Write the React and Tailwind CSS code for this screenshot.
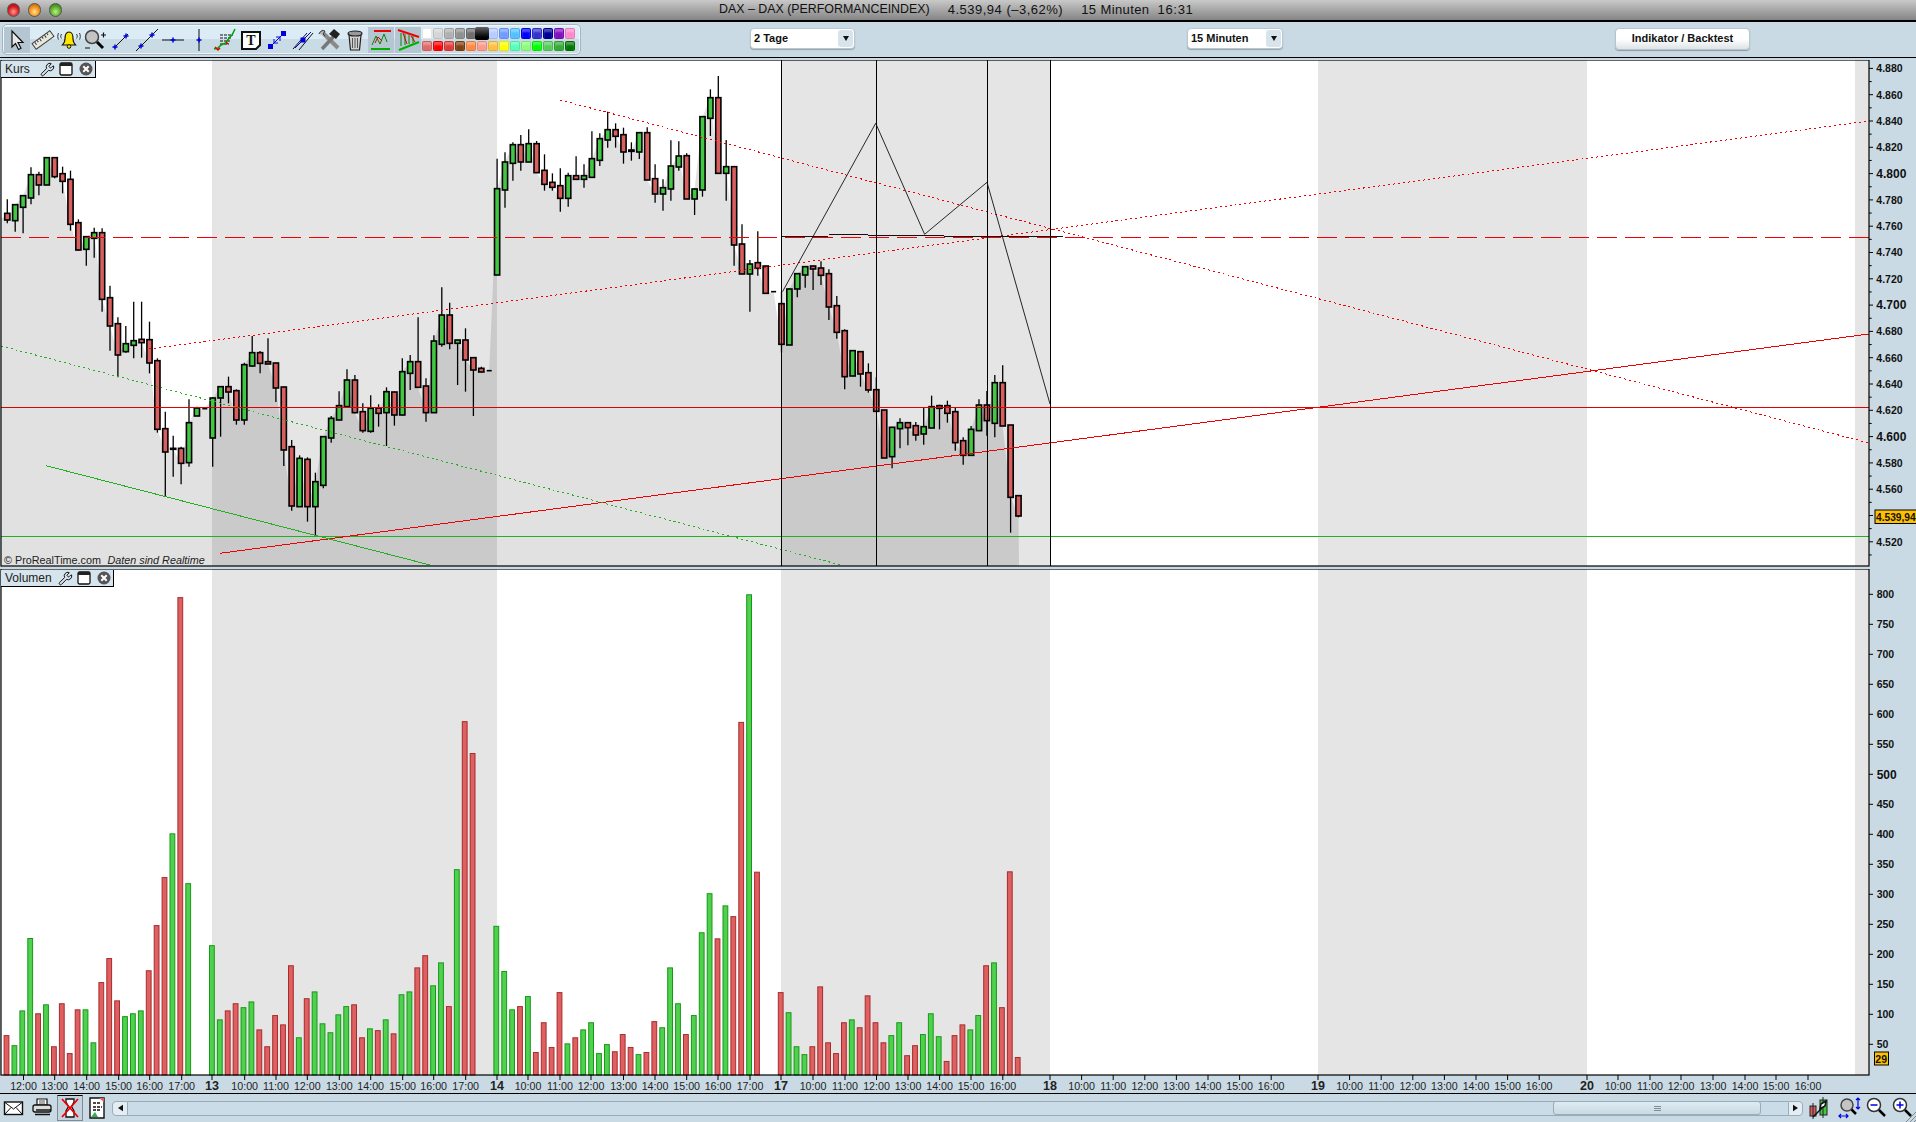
import React from 'react';
import { Wrench } from 'lucide-react';

// y values of candles are read off the chart at 3x, so screen y = 60 + v / 3
const CANDLES = [
  [418, 460, 480, 490, 'r'], [434, 434, 482, 515, 'g'], [407, 407, 442, 520, 'g'], [322, 344, 414, 433, 'g'],
  [335, 344, 375, 406, 'r'], [293, 293, 375, 375, 'g'], [293, 293, 350, 355, 'r'], [320, 341, 364, 400, 'r'],
  [332, 358, 493, 512, 'r'], [478, 488, 570, 572, 'r'], [530, 530, 568, 617, 'g'], [503, 518, 535, 593, 'g'],
  [505, 518, 718, 755, 'r'], [677, 713, 798, 872, 'r'], [772, 791, 885, 952, 'r'], [798, 851, 875, 878, 'g'],
  [725, 842, 856, 895, 'g'], [725, 838, 848, 893, 'r'], [785, 839, 909, 940, 'r'], [895, 902, 1108, 1118, 'r'],
  [1055, 1106, 1176, 1308, 'r'], [1127, 1165, 1168, 1250, 'k'], [1160, 1165, 1210, 1273, 'r'], [1018, 1088, 1208, 1220, 'g'],
  [1040, 1044, 1068, 1068, 'g'], [1046, 1046, 1046, 1046, 'k'], [1012, 1014, 1134, 1220, 'g'], [980, 980, 1014, 1130, 'g'],
  [950, 980, 996, 1030, 'r'], [988, 992, 1080, 1094, 'r'], [908, 914, 1080, 1094, 'g'], [828, 878, 918, 920, 'g'],
  [873, 878, 910, 940, 'r'], [835, 905, 912, 912, 'k'], [908, 909, 984, 1026, 'r'], [980, 981, 1170, 1218, 'r'],
  [1140, 1160, 1338, 1352, 'r'], [1186, 1195, 1340, 1340, 'g'], [1192, 1198, 1340, 1385, 'r'], [1238, 1265, 1340, 1425, 'g'],
  [1130, 1130, 1276, 1285, 'g'], [1068, 1075, 1134, 1148, 'g'], [994, 1037, 1080, 1080, 'g'], [928, 960, 1040, 1040, 'g'],
  [945, 960, 1058, 1060, 'r'], [1030, 1055, 1112, 1118, 'r'], [1006, 1045, 1114, 1118, 'g'], [1033, 1044, 1060, 1100, 'r'],
  [982, 995, 1058, 1158, 'g'], [995, 996, 1065, 1097, 'r'], [895, 935, 1065, 1066, 'g'], [885, 905, 940, 990, 'g'],
  [772, 905, 982, 982, 'r'], [955, 978, 1058, 1085, 'r'], [826, 843, 1058, 1058, 'g'], [682, 765, 853, 860, 'g'],
  [728, 765, 850, 868, 'r'], [840, 840, 850, 975, 'g'], [805, 840, 900, 995, 'r'], [893, 893, 930, 1068, 'r'],
  [920, 925, 936, 937, 'r'], [932, 932, 932, 932, 'k'], [296, 386, 645, 645, 'g'], [277, 306, 390, 443, 'g'],
  [247, 254, 310, 362, 'g'], [225, 254, 306, 332, 'r'], [208, 251, 306, 306, 'g'], [243, 251, 338, 338, 'r'],
  [283, 331, 373, 392, 'r'], [340, 367, 382, 392, 'r'], [325, 377, 415, 455, 'r'], [338, 347, 415, 440, 'g'],
  [289, 347, 358, 358, 'r'], [313, 347, 358, 383, 'g'], [214, 296, 352, 352, 'g'], [220, 236, 301, 318, 'g'],
  [155, 209, 240, 263, 'g'], [190, 209, 229, 263, 'r'], [203, 224, 276, 311, 'r'], [247, 270, 274, 302, 'k'],
  [218, 218, 276, 297, 'g'], [202, 218, 360, 360, 'r'], [313, 356, 402, 428, 'r'], [358, 383, 402, 452, 'g'],
  [241, 318, 387, 422, 'g'], [244, 288, 321, 332, 'g'], [280, 287, 417, 418, 'r'], [385, 387, 417, 465, 'g'],
  [170, 170, 390, 410, 'g'], [88, 113, 175, 228, 'g'], [48, 113, 340, 340, 'r'], [240, 320, 340, 422, 'g'],
  [320, 320, 555, 617, 'r'], [493, 552, 642, 642, 'r'], [600, 612, 642, 755, 'g'], [514, 608, 625, 647, 'r'],
  [617, 618, 700, 700, 'r'], [695, 695, 695, 695, 'k'], [695, 731, 853, 878, 'r'], [685, 687, 855, 855, 'g'],
  [640, 641, 687, 712, 'g'], [618, 620, 645, 683, 'g'], [617, 618, 627, 690, 'r'], [604, 624, 646, 675, 'r'],
  [628, 641, 741, 780, 'r'], [708, 737, 817, 836, 'r'], [808, 812, 950, 988, 'r'], [872, 872, 948, 948, 'g'],
  [875, 875, 942, 980, 'r'], [910, 938, 990, 998, 'r'], [952, 989, 1054, 1054, 'r'], [1050, 1050, 1194, 1194, 'r'],
  [1100, 1102, 1190, 1225, 'g'], [1075, 1088, 1106, 1165, 'g'], [1088, 1088, 1103, 1156, 'r'], [1086, 1097, 1125, 1142, 'r'],
  [1044, 1100, 1122, 1154, 'g'], [1007, 1040, 1104, 1105, 'g'], [1034, 1037, 1045, 1108, 'k'], [1022, 1037, 1060, 1088, 'r'],
  [1044, 1055, 1148, 1172, 'r'], [1132, 1142, 1186, 1214, 'r'], [1098, 1108, 1186, 1188, 'g'], [1018, 1035, 1112, 1112, 'g'],
  [993, 1035, 1082, 1127, 'r'], [945, 968, 1090, 1132, 'g'], [916, 968, 1098, 1098, 'r'], [1095, 1095, 1312, 1418, 'r'],
  [1307, 1307, 1368, 1372, 'r'],
];

// volume tops, screen y = 560 + v / 2.79; null = no bar for that candle
const VOLUMES = [
  [1327, 'r'], [1355, 'g'], [1258, 'g'], [1056, 'g'], [1266, 'r'], [1241, 'g'], [1358, 'r'], [1238, 'r'], [1377, 'r'], [1255, 'r'],
  [1255, 'g'], [1347, 'g'], [1179, 'r'], [1112, 'r'], [1230, 'r'], [1274, 'g'], [1266, 'g'], [1258, 'g'], [1146, 'r'], [1020, 'r'],
  [886, 'r'], [764, 'g'], [105, 'r'], [903, 'g'], null, null,
  [1076, 'g'], [1283, 'g'], [1258, 'r'], [1238, 'r'], [1249, 'g'], [1233, 'g'], [1311, 'r'], [1358, 'r'], [1271, 'r'], [1297, 'r'],
  [1132, 'r'], [1333, 'g'], [1224, 'r'], [1205, 'g'], [1294, 'g'], [1319, 'g'], [1269, 'g'], [1246, 'g'], [1241, 'r'], [1333, 'r'],
  [1308, 'g'], [1313, 'r'], [1283, 'g'], [1322, 'r'], [1213, 'g'], [1205, 'g'], [1138, 'r'], [1104, 'r'], [1188, 'g'], [1124, 'g'],
  [1246, 'r'], [864, 'g'], [451, 'r'], [540, 'r'], null, null,
  [1022, 'g'], [1148, 'g'], [1255, 'g'], [1246, 'r'], [1218, 'g'], [1374, 'r'], [1291, 'r'], [1360, 'r'], [1207, 'r'], [1350, 'g'],
  [1333, 'r'], [1311, 'g'], [1291, 'g'], [1377, 'g'], [1352, 'g'], [1372, 'r'], [1324, 'r'], [1360, 'r'], [1380, 'g'], [1374, 'r'],
  [1288, 'r'], [1305, 'g'], [1138, 'g'], [1238, 'g'], [1324, 'r'], [1271, 'g'], [1040, 'g'], [931, 'g'], [1057, 'r'], [965, 'g'],
  [995, 'r'], [453, 'r'], [97, 'g'], [871, 'r'], null, null,
  [1207, 'r'], [1263, 'g'], [1358, 'g'], [1380, 'g'], [1358, 'r'], [1191, 'r'], [1347, 'r'], [1377, 'r'], [1291, 'r'], [1283, 'g'],
  [1305, 'r'], [1216, 'r'], [1291, 'r'], [1347, 'r'], [1327, 'g'], [1291, 'g'], [1383, 'r'], [1355, 'r'], [1324, 'g'], [1266, 'g'],
  [1330, 'g'], [1399, 'r'], [1327, 'r'], [1297, 'r'], [1311, 'g'], [1271, 'g'], [1132, 'r'], [1124, 'g'], [1249, 'r'], [870, 'r'], [1388, 'r'],
];

const BANDS = [[212, 497], [781, 1050], [1318, 1587], [1855, 1869]];

const TIMES = [
  [23.5, '12:00'], [54.7, '13:00'], [86.7, '14:00'], [118.7, '15:00'], [149.7, '16:00'], [181.7, '17:00'], [212, '13', 1],
  [244.7, '10:00'], [276, '11:00'], [307.3, '12:00'], [339.3, '13:00'], [370.7, '14:00'], [402.7, '15:00'], [433.7, '16:00'], [465.7, '17:00'], [497, '14', 1],
  [528, '10:00'], [560, '11:00'], [591, '12:00'], [623.5, '13:00'], [655, '14:00'], [686.7, '15:00'], [718, '16:00'], [750, '17:00'], [781, '17', 1],
  [813, '10:00'], [845, '11:00'], [876.5, '12:00'], [908, '13:00'], [939.6, '14:00'], [971, '15:00'], [1002.8, '16:00'], [1050, '18', 1],
  [1081.6, '10:00'], [1113.2, '11:00'], [1144.8, '12:00'], [1176.4, '13:00'], [1208, '14:00'], [1239.6, '15:00'], [1271.2, '16:00'], [1318, '19', 1],
  [1349.6, '10:00'], [1381.2, '11:00'], [1412.8, '12:00'], [1444.4, '13:00'], [1476, '14:00'], [1507.6, '15:00'], [1539.2, '16:00'], [1587, '20', 1],
  [1618, '10:00'], [1650, '11:00'], [1681, '12:00'], [1713, '13:00'], [1745, '14:00'], [1776, '15:00'], [1808, '16:00'],
];

const SWATCHES_TOP = [
  'bg-[#ffffff]', 'bg-[#d5d5d5]', 'bg-[#b0b0b0]', 'bg-[#909090]', 'bg-[#6e6e6e]', 'bg-[#000000]', 'bg-[#b8ccff]',
  'bg-[#6e9cff]', 'bg-[#55c0ff]', 'bg-[#0000ff]', 'bg-[#3333cc]', 'bg-[#000099]', 'bg-[#8010c0]', 'bg-[#ff88cc]',
];
const SWATCHES_BOTTOM = [
  'bg-[#e06868]', 'bg-[#ff0000]', 'bg-[#e03a3a]', 'bg-[#804010]', 'bg-[#ff8844]', 'bg-[#ff9988]', 'bg-[#ffc040]',
  'bg-[#ffff00]', 'bg-[#55ffbb]', 'bg-[#88ff77]', 'bg-[#00ff00]', 'bg-[#55cc55]', 'bg-[#33aa33]', 'bg-[#007700]',
];

const candleX = (i) => 7.3 + 7.9 * i;
const priceY = (v) => 60 + v / 3;

function Icon({ children }) {
  return <svg viewBox="0 0 24 24" className="w-6 h-6 block">{children}</svg>;
}

function Cross({ x, y }) {
  return <path d={`M${x - 2.5} ${y}H${x + 2.5}M${x} ${y - 2.5}V${y + 2.5}`} stroke="#0000e0" strokeWidth="1.5" fill="none" />;
}

function ToolButton({ active, children }) {
  return (
    <div className={`w-[26px] h-[26px] flex items-center justify-center ${active ? 'bg-[#b4c6d1]' : ''}`}>
      {children}
    </div>
  );
}

function Toolbar() {
  return (
    <div className="h-[36px] flex items-center bg-[#c9dae4] border-b border-black">
      <div className="ml-[2px] w-[579px] h-[31px] flex items-center pl-[1px] rounded-[5px] border border-[#a3b5c0] shadow-[inset_0_0_0_1px_rgba(255,255,255,0.65)] bg-gradient-to-b from-[#dcecf6] from-50% to-[#c9dbe5] to-50%">
        <ToolButton active>
          <Icon><path d="M7 3V19L10.5 15.5L13.5 21.5L16 20.2L13 14.5H18Z" fill="#e8e8e8" stroke="#111" strokeWidth="1.2" /></Icon>
        </ToolButton>
        <ToolButton>
          <Icon>
            <g transform="rotate(-36 12 12)">
              <rect x="1" y="8.5" width="22" height="7" fill="#e8e8dc" stroke="#444" />
              <path d="M4 9v3M7 9v2M10 9v3M13 9v2M16 9v3M19 9v2" stroke="#333" />
            </g>
          </Icon>
        </ToolButton>
        <ToolButton>
          <Icon>
            <path d="M12 4C8 4 8 8 8 11C8 14 7 15.5 5.5 17H18.5C17 15.5 16 14 16 11C16 8 16 4 12 4Z" fill="#ffe600" stroke="#111" strokeWidth="1.2" />
            <circle cx="12" cy="18.5" r="1.8" fill="#ffe600" stroke="#111" />
            <path d="M4.5 6C3.5 7.5 3.5 9 4.5 10.5M19.5 6C20.5 7.5 20.5 9 19.5 10.5M1.5 5C.5 7 .5 10 1.5 11.5M22.5 5C23.5 7 23.5 10 22.5 11.5" stroke="#333" fill="none" />
          </Icon>
        </ToolButton>
        <ToolButton>
          <Icon>
            <circle cx="9" cy="9" r="6.5" fill="#c4c4c4" stroke="#444" strokeWidth="1.5" />
            <path d="M14 14L20 20" stroke="#000" strokeWidth="3" />
            <path d="M18 7h5M20.500 4.500v5M2 20h5" stroke="#111" strokeWidth="1.2" />
          </Icon>
        </ToolButton>
        <ToolButton>
          <Icon>
            <path d="M5 20L19 6" stroke="#111" />
            <Cross x={6} y={19} /><Cross x={17} y={8} />
          </Icon>
        </ToolButton>
        <ToolButton>
          <Icon>
            <path d="M1 23L23 1" stroke="#111" />
            <Cross x={6} y={18} /><Cross x={17} y={7} />
          </Icon>
        </ToolButton>
        <ToolButton>
          <Icon>
            <path d="M1 12H23" stroke="#111" />
            <Cross x={12} y={12} />
          </Icon>
        </ToolButton>
        <ToolButton>
          <Icon>
            <path d="M12 1V23" stroke="#111" />
            <Cross x={12} y={12} />
          </Icon>
        </ToolButton>
        <ToolButton>
          <Icon>
            <path d="M7 7H20M7 10H18M7 13H17M7 16H16" stroke="#111" strokeDasharray="3 1" />
            <path d="M1 21L5 20L8 17L13 15L16 10L19 7L22 1" stroke="#00a000" strokeWidth="1.5" fill="none" />
            <path d="M2 19L5 22L7 20M13 14L15 16" stroke="#e00000" strokeWidth="1.5" fill="none" />
          </Icon>
        </ToolButton>
        <ToolButton>
          <Icon>
            <path d="M3 4H21V17L17 21H3Z" fill="#fff" stroke="#111" strokeWidth="2" />
            <text x="12" y="16.500" textAnchor="middle" fontSize="14" fontWeight="700" fontFamily="Liberation Serif, serif" fill="#111">T</text>
          </Icon>
        </ToolButton>
        <ToolButton>
          <Icon>
            <rect x="3" y="16" width="5" height="5" fill="#0000e0" />
            <rect x="16" y="3" width="5" height="5" fill="#0000e0" />
            <path d="M8 16L16 8M9 11V15H13M15 13V9H11" stroke="#0000e0" fill="none" />
          </Icon>
        </ToolButton>
        <ToolButton>
          <Icon>
            <path d="M2 21L16 5M8 22L22 5" stroke="#111" />
            <path d="M4 20L20 4" stroke="#0000e0" />
            <rect x="9.500" y="9.500" width="5" height="5" fill="#0000e0" />
          </Icon>
        </ToolButton>
        <ToolButton>
          <Icon>
            <path d="M4 3L21 20" stroke="#8a8a8a" strokeWidth="4" />
            <path d="M2 6C3 3 6 2 8 3L6 6L8 8" fill="#bbb" stroke="#333" />
            <path d="M5 21L18 7" stroke="#777" strokeWidth="3.5" />
            <path d="M12 6L17 1L23 6L19 11Z" fill="#222" />
          </Icon>
        </ToolButton>
        <ToolButton>
          <Icon>
            <path d="M6 7L7.500 22H16.500L18 7Z" fill="#d0d0d0" stroke="#222" strokeWidth="1.200" />
            <ellipse cx="12" cy="5.500" rx="7" ry="2.500" fill="#999" stroke="#222" strokeWidth="1.200" />
            <path d="M9.500 10V20M12 10V20M14.500 10V20" stroke="#555" />
          </Icon>
        </ToolButton>
        <div className="w-[26px] h-[26px] flex items-center justify-center bg-[#b4c6d1]">
          <Icon>
            <path d="M5 3H22" stroke="#f00000" strokeWidth="2" />
            <path d="M2 21H21" stroke="#00b000" strokeWidth="2" />
            <path d="M3 17L7 8L11 16L15 6L18 14" stroke="#008800" fill="none" />
            <path d="M6 15L9 9L13 13" stroke="#d00000" fill="none" />
          </Icon>
        </div>
        <div className="w-[26px] h-[26px] ml-px flex items-center justify-center bg-[#b4c6d1]">
          <Icon>
            <path d="M2 2L23 9" stroke="#f00000" strokeWidth="2" />
            <path d="M3 22L23 14" stroke="#00b000" strokeWidth="2" />
            <path d="M5 5V18M9 6V17M13 7V16M17 8V15" stroke="#008800" />
            <path d="M7 5L11 16M15 8L19 14" stroke="#d00000" />
          </Icon>
        </div>
        <div className="ml-[1px] grid grid-cols-[repeat(14,11px)] gap-y-[1.5px]">
          {SWATCHES_TOP.map((c, i) =>
            i === 5 ? (
              <div key={c} className="relative z-10 -mt-[1px] -ml-[2px] w-[14px] h-[13px] rounded-[2px] bg-gradient-to-b from-[#666] to-[#000]" />
            ) : (
              <div key={c} className={`w-[10px] h-[11px] rounded-[2px] border border-black/10 shadow-[inset_0_3px_2px_rgba(255,255,255,0.3)] ${c}`} />
            )
          )}
          {SWATCHES_BOTTOM.map((c) => (
            <div key={c} className={`w-[10px] h-[10px] rounded-[2px] border border-black/10 shadow-[inset_0_3px_2px_rgba(255,255,255,0.3)] ${c}`} />
          ))}
        </div>
      </div>
      <Select label="2 Tage" className="ml-[169px] w-[105px]" />
      <Select label="15 Minuten" className="ml-[332px] w-[96px]" />
      <div className="ml-[332px] -mt-[2px] w-[135px] h-[22px] rounded-[4px] border border-[#b8c4cc] bg-gradient-to-b from-white from-50% to-[#dde3e7] shadow-[0_1px_1px_rgba(0,0,0,0.3)] flex items-center justify-center text-[11px] font-bold text-[#111]">
        Indikator / Backtest
      </div>
    </div>
  );
}

function Select({ label, className }) {
  return (
    <div className={`h-[21px] -mt-[2px] rounded-[4px] bg-white border border-[#b8c8d2] shadow-[0_1px_1px_rgba(0,0,0,0.25)] flex items-center justify-between pl-[3px] pr-[1px] text-[11px] font-bold text-[#111] ${className}`}>
      <span>{label}</span>
      <span className="w-[15px] h-[17px] rounded-[3px] bg-[#d8e4ec] flex items-center justify-center">
        <svg viewBox="0 0 6 5" className="w-[6px] h-[5px]"><path d="M0 0H6L3 5Z" fill="#111" /></svg>
      </span>
    </div>
  );
}

function PanelLabel({ name, width }) {
  return (
    <div className={`absolute top-px left-px h-[17px] ${width} bg-[#d6e4ed] border-r border-b border-black flex items-center pl-[4px] text-[12px] text-[#222]`}>
      <span className="flex-1">{name}</span>
      <Wrench size={15} strokeWidth={1.6} className="text-[#111] -scale-x-100 rotate-90 mr-[4px]" />
      <svg viewBox="0 0 14 14" className="w-[14px] h-[14px] mr-[6px]">
        <rect x="1" y="1" width="12" height="12" rx="1.500" fill="#fff" stroke="#111" strokeWidth="1.300" />
        <rect x="1" y="1" width="12" height="3" fill="#222" />
      </svg>
      <svg viewBox="0 0 14 14" className="w-[14px] h-[14px] mr-[2px]">
        <circle cx="7" cy="7" r="6.500" fill="#555" />
        <path d="M4.300 4.300L9.700 9.700M9.700 4.300L4.300 9.700" stroke="#fff" strokeWidth="2" />
      </svg>
    </div>
  );
}

function Candle({ c, i }) {
  const [hi, open, close, lo, kind] = c;
  const x = candleX(i);
  if (open === close) return <rect x={x - 2.5} y={priceY(open) - 0.8} width="5" height="1.6" fill="#000" />;
  const fill = kind === 'g' ? '#42c742' : '#d95f5f';
  return (
    <g>
      <line x1={x} x2={x} y1={priceY(hi)} y2={priceY(lo)} stroke="#000" strokeWidth="1.300" />
      <rect x={x - 2.6} y={priceY(open)} width="5.200" height={(close - open) / 3} fill={fill} stroke="#000" strokeWidth="1.600" />
    </g>
  );
}

function PricePanel() {
  const area = [
    `1,566`,
    `1,${priceY(470)}`,
    ...CANDLES.map((c, i) => `${candleX(i)},${priceY(c[4] === 'g' ? c[1] : c[2])}`),
    `1019,566`,
  ].join(' ');
  const labels = [];
  for (let k = 0; k <= 18; k++) {
    const p = 4880 - k * 20;
    if (p === 4540) continue;
    labels.push({ y: 68.4 + k * 26.3, text: `4.${p - 4000}`, big: p % 100 === 0 });
  }
  return (
    <div className="relative mt-[2px] h-[507px]">
      <svg viewBox="0 60 1916 507" width="1916" height="507" className="block">
        <rect x="1" y="60" width="1868" height="506" fill="#fff" />
        {BANDS.map(([a, b]) => <rect key={a} x={a} y="60" width={b - a} height="506" fill="#e5e5e5" />)}
        <polygon points={area} fill="#000" fillOpacity="0.118" />
        {CANDLES.map((c, i) => <Candle key={i} c={c} i={i} />)}

        <g shapeRendering="crispEdges">
          <line x1="1" x2="1869" y1="237.500" y2="237.500" stroke="#f00000" strokeDasharray="20 8" />
          <line x1="1" x2="1869" y1="407.500" y2="407.500" stroke="#e00000" />
          <line x1="1" x2="1869" y1="536.500" y2="536.500" stroke="#20b020" />
          <line x1="220" y1="553.300" x2="1869" y2="334" stroke="#f00000" />
          <line x1="149" y1="349" x2="1869" y2="121" stroke="#f00000" strokeDasharray="2 3" />
          <line x1="560" y1="100" x2="1869" y2="443" stroke="#f00000" strokeDasharray="2 3" />
          <line x1="1" y1="346" x2="841" y2="565" stroke="#20b020" strokeDasharray="2 3" />
          <line x1="46" y1="465.700" x2="430" y2="565" stroke="#20b020" />
          {[781.5, 876.5, 987.5, 1050.5].map((x) => <line key={x} x1={x} x2={x} y1="60" y2="566" stroke="#000" />)}
          <path d="M782 236.500H828M829 234.500H867.500M868 235.500H943.600M944 236.500L1063 237" stroke="#111" fill="none" />
        </g>
        <polyline points="782.500,291.700 875.700,123.300 924.600,234.300 987,182.300 1050,404" fill="none" stroke="#111" strokeWidth="0.900" />

        <text x="4" y="564" fontSize="10.800" fill="#222">© ProRealTime.com</text>
        <text x="107.500" y="564" fontSize="10.800" fontStyle="italic" fill="#222">Daten sind Realtime</text>

        <rect x="1" y="60" width="1868" height="506" fill="none" stroke="#000" strokeWidth="1.200" />
        {Array.from({ length: 38 }, (_, k) => {
          const y = 68.4 + k * 13.15;
          return <line key={k} x1="1869" x2={k % 2 ? 1871.7 : 1873} y1={y} y2={y} stroke="#000" />;
        })}
        {labels.map((l) => (
          <text key={l.text} x="1876.300" y={l.y + (l.big ? 4.3 : 3.8)} fontSize={l.big ? 12 : 10.5} fontWeight="700" fill="#111">{l.text}</text>
        ))}
        <rect x="1875" y="510" width="48" height="13.500" fill="#ffc000" stroke="#000" />
        <text x="1876" y="520.800" fontSize="10.200" fontWeight="700" fill="#111">4.539,94</text>
      </svg>
      <PanelLabel name="Kurs" width="w-[95px]" />
    </div>
  );
}

function VolumePanel() {
  return (
    <div className="relative mt-[2px] h-[524px]">
      <svg viewBox="0 569 1916 524" width="1916" height="524" className="block">
        <rect x="1" y="569" width="1868" height="506" fill="#fff" />
        {BANDS.map(([a, b]) => <rect key={a} x={a} y="569" width={b - a} height="506" fill="#e5e5e5" />)}
        {VOLUMES.map((v, i) => {
          if (!v) return null;
          const top = 560 + v[0] / 2.79;
          return (
            <rect
              key={i}
              x={candleX(i) - 3.2}
              y={top}
              width="4.800"
              height={1075 - top}
              fill={v[1] === 'g' ? '#4fd14f' : '#de6060'}
              stroke={v[1] === 'g' ? '#169a16' : '#a82b2e'}
            />
          );
        })}
        <rect x="1" y="569" width="1868" height="506" fill="none" stroke="#000" strokeWidth="1.200" />
        {Array.from({ length: 16 }, (_, k) => {
          const y = 594.300 + k * 30;
          const val = 800 - k * 50;
          return (
            <g key={k}>
              <line x1="1869" x2="1873" y1={y} y2={y} stroke="#000" />
              <text x="1876.700" y={y + (val === 500 ? 4.3 : 3.8)} fontSize={val === 500 ? 12 : 10.5} fontWeight="700" fill="#111">{val}</text>
            </g>
          );
        })}
        <rect x="1874.500" y="1052" width="14" height="13" fill="#ffc000" stroke="#000" />
        <text x="1875.300" y="1062.700" fontSize="10.500" fontWeight="700" fill="#111">29</text>
        {TIMES.map(([x, t, day]) => (
          <g key={`${x}`}>
            <line x1={x} x2={x} y1="1075" y2="1080" stroke="#000" />
            <text x={x} y="1090" textAnchor="middle" fontSize={day ? 12.5 : 10.7} fontWeight={day ? 700 : 400} fill="#222">{t}</text>
          </g>
        ))}
      </svg>
      <PanelLabel name="Volumen" width="w-[113px]" />
    </div>
  );
}

function BottomBar() {
  return (
    <div className="h-[29px] border-t border-black flex items-center pl-[1px] bg-[#c9dae4] relative">
      <div className="w-[26px] flex justify-center">
        <Icon>
          <rect x="2.500" y="6" width="18" height="12.500" fill="#fff" stroke="#111" strokeWidth="1.400" />
          <path d="M3 6.500L11.500 13L20 6.500M3 18L9 11.500M20 18L14 11.500" stroke="#111" fill="none" />
        </Icon>
      </div>
      <div className="w-[26px] ml-[2px] flex justify-center">
        <Icon>
          <path d="M7 3H17V9H7Z" fill="#fff" stroke="#111" strokeWidth="1.200" />
          <rect x="3" y="9" width="18" height="7" rx="2" fill="#ddd" stroke="#111" strokeWidth="1.300" />
          <path d="M6 14H21M5 18.500H20" stroke="#111" strokeWidth="1.500" />
          <path d="M9 5H15M9 7H15" stroke="#555" />
        </Icon>
      </div>
      <div className="w-[26px] h-[26px] ml-[2px] flex justify-center items-center border border-[#7d8b94] border-t-black bg-[#c3d4de]">
        <Icon>
          <path d="M8 3H16V6L13.500 10.500L16 15V21H8V15L10.500 10.500L8 6Z" fill="#fff" stroke="#111" strokeWidth="1.300" />
          <path d="M4 3L20 21M20 3L4 21" stroke="#f00000" strokeWidth="1.800" />
        </Icon>
      </div>
      <div className="w-[24px] ml-[2px] flex justify-center">
        <Icon>
          <path d="M5 2H19V22H5Z" fill="#fff" stroke="#111" strokeWidth="1.400" />
          <path d="M8 7H15M8 11H17M8 14H16" stroke="#111" strokeWidth="1.300" strokeDasharray="3 1" />
          <path d="M14 2H19V6Z" fill="#e06060" />
          <path d="M6 21L10 16L13 21Z" fill="#30b050" />
        </Icon>
      </div>
      <div className="ml-[3px] w-[16px] h-[15px] rounded-l-[4px] border border-[#9aacb8] bg-[#e3edf3] flex items-center justify-center shrink-0">
        <svg viewBox="0 0 6 8" className="w-[5px] h-[8px]"><path d="M6 0V8L0 4Z" fill="#111" /></svg>
      </div>
      <div className="w-[1660px] h-[15px] border-y border-[#9aacb8] bg-[#c9dce7] flex items-center justify-end pr-[27px] shrink-0">
        <div className="w-[208px] h-[14px] rounded-[3px] border border-[#9aacb8] bg-gradient-to-b from-[#deebf2] to-[#c8dae5] flex flex-col items-center justify-center gap-px">
          <div className="w-[7px] h-px bg-[#7e8d97]" />
          <div className="w-[7px] h-px bg-[#7e8d97]" />
          <div className="w-[7px] h-px bg-[#7e8d97]" />
        </div>
      </div>
      <div className="w-[15px] h-[15px] rounded-r-[4px] border border-[#9aacb8] bg-[#e3edf3] flex items-center justify-center shrink-0">
        <svg viewBox="0 0 6 8" className="w-[5px] h-[8px]"><path d="M0 0V8L6 4Z" fill="#111" /></svg>
      </div>
      <div className="ml-[4px] flex shrink-0">
        <div className="w-[26px]">
          <Icon>
            <rect x="3" y="10" width="6" height="10" fill="#d95f5f" stroke="#222" />
            <rect x="13" y="4" width="7" height="15" fill="#42c742" stroke="#222" />
            <path d="M6 7V23M16 1V22" stroke="#222" />
            <path d="M6 21L16 11M14 8L19 5L18 10L13 13Z" stroke="#111" strokeWidth="1.500" fill="#fff" />
          </Icon>
        </div>
        <div className="w-[30px] ml-[1px] flex justify-center">
          <Icon>
            <circle cx="10" cy="9" r="6" fill="#c4c4c4" stroke="#444" strokeWidth="1.500" />
            <path d="M14.500 13.500L19 18" stroke="#000" strokeWidth="2.500" />
            <path d="M21 2V13M19 4L21 2L23 4M19 11L21 13L23 11M2 20H11M4 18L2 20L4 22M9 18L11 20L9 22" stroke="#0000e0" strokeWidth="1.200" fill="none" />
          </Icon>
        </div>
        <div className="w-[26px] flex justify-center">
          <Icon>
            <circle cx="9" cy="9" r="6.500" fill="#fff" stroke="#333" strokeWidth="1.500" />
            <path d="M5.500 9H12.500" stroke="#0000e0" strokeWidth="1.500" />
            <path d="M14 14L20 20" stroke="#000" strokeWidth="2.500" />
          </Icon>
        </div>
        <div className="w-[26px] flex justify-center">
          <Icon>
            <circle cx="9" cy="9" r="6.500" fill="#fff" stroke="#333" strokeWidth="1.500" />
            <path d="M5.500 9H12.500M9 5.500V12.500" stroke="#0000e0" strokeWidth="1.500" />
            <path d="M14 14L20 20" stroke="#000" strokeWidth="2.500" />
          </Icon>
        </div>
      </div>
      <svg viewBox="0 0 12 12" className="w-[12px] h-[12px] absolute right-0 bottom-0">
        <path d="M12 2L2 12M12 6L6 12M12 10L10 12" stroke="#7d8b94" />
      </svg>
    </div>
  );
}

export default function App() {
  return (
    <div className="w-[1916px] h-[1122px] overflow-hidden flex flex-col bg-[#c9dae4] font-['Liberation_Sans',sans-serif]">
      <div className="h-[22px] shrink-0 flex items-center relative bg-gradient-to-b from-[#c9c9c9] to-[#858585] border-b-2 border-black">
        <div className="flex gap-[8px] pl-[7px]">
          <span className="w-[13px] h-[14px] rounded-full border border-[#555] bg-[radial-gradient(circle_at_50%_65%,#ff9a9a,#d81818_55%,#901010)]" />
          <span className="w-[13px] h-[14px] rounded-full border border-[#555] bg-[radial-gradient(circle_at_50%_65%,#ffe28a,#f08a18_55%,#a85a10)]" />
          <span className="w-[13px] h-[14px] rounded-full border border-[#555] bg-[radial-gradient(circle_at_50%_65%,#b8f08a,#58a828_55%,#2e6c14)]" />
        </div>
        <div className="absolute left-[719px] flex text-[13px] text-[#111] whitespace-pre">
          <span className="text-[12.4px]">DAX – DAX (PERFORMANCEINDEX)</span>
          <span className="ml-[18px] tracking-[0.5px]">4.539,94 (–3,62%)</span>
          <span className="ml-[18px] tracking-[0.4px]">15 Minuten</span>
          <span className="ml-[8px] tracking-[0.7px]">16:31</span>
        </div>
      </div>
      <Toolbar />
      <PricePanel />
      <VolumePanel />
      <BottomBar />
    </div>
  );
}
